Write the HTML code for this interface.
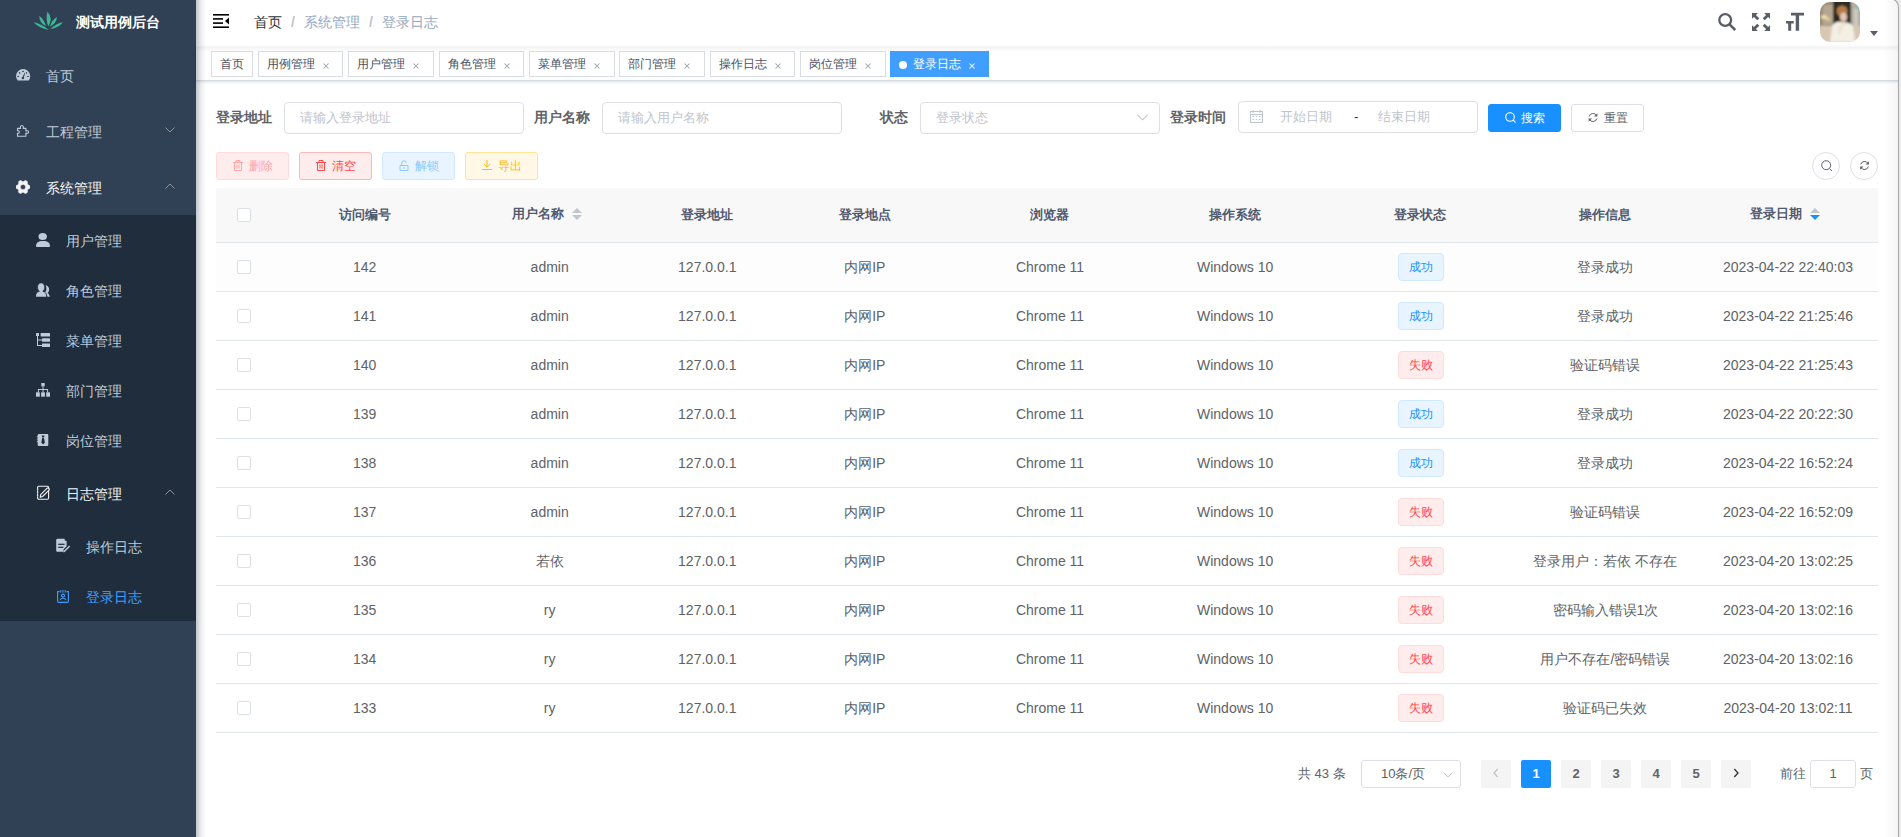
<!DOCTYPE html>
<html><head><meta charset="utf-8">
<style>
*{box-sizing:border-box;margin:0;padding:0}
html,body{width:1901px;height:837px;overflow:hidden;background:#fff}
body{position:relative;font-family:"Liberation Sans",sans-serif;font-size:14px;color:#606266}
.a{position:absolute;white-space:nowrap}
#side{position:absolute;left:0;top:0;width:196px;height:837px;background:#304156;overflow:hidden}
#sub{position:absolute;left:0;top:215px;width:196px;height:406px;background:#1f2d3d}
.mi{position:absolute;left:0;width:196px;height:56px;line-height:56px;color:#bfcbd9;font-size:14px}
.mi .t{position:absolute;left:46px;top:1px}
.mi svg{position:absolute}
.si{position:absolute;left:0;width:196px;height:50px;line-height:50px;color:#bfcbd9;font-size:14px}
.si .t{position:absolute;left:66px;top:1px}
.si svg{position:absolute}
.chev{position:absolute;left:165px;width:10px;height:6px}
#shadow{position:absolute;left:196px;top:0;width:10px;height:837px;background:linear-gradient(to right,rgba(0,21,41,.24),rgba(0,21,41,.08) 50%,rgba(0,21,41,0))}
/* navbar */
#nav{position:absolute;left:196px;top:0;width:1705px;height:47px;background:#fff}
.bc{position:absolute;top:0;line-height:44px;font-size:14px}
/* tags */
#tags{position:absolute;left:196px;top:47px;width:1705px;height:34px;background:#fff;border-bottom:1px solid #d8dce5;box-shadow:0 1px 3px 0 rgba(0,0,0,.12),0 0 3px 0 rgba(0,0,0,.04)}
.tag{position:absolute;top:4px;height:26px;line-height:24px;border:1px solid #d8dce5;color:#495060;background:#fff;font-size:12px;padding-left:8px}
.tag .x{position:absolute;top:0;font-size:11px;color:#495060}
/* form */
.lbl{position:absolute;top:101px;line-height:32px;font-weight:700;font-size:14px;color:#606266;text-align:right}
.inp{position:absolute;top:102px;height:32px;width:240px;border:1px solid #dcdfe6;border-radius:4px;background:#fff;line-height:30px;padding-left:15px;color:#c0c4cc;font-size:13px}
.btn{position:absolute;height:28px;line-height:26px;border:1px solid;border-radius:3px;font-size:12px;text-align:center}
/* table */
#thead{position:absolute;left:216px;top:188px;width:1662px;height:55px;background:#f8f8f9;border-bottom:1px solid #dfe6ec}
.th{position:absolute;top:188px;line-height:54px;font-size:13px;font-weight:700;color:#515a6e;text-align:center}
.row{position:absolute;left:216px;width:1662px;height:49px;border-bottom:1px solid #dfe6ec}
.td{position:absolute;line-height:48px;font-size:14px;color:#606266;text-align:center}
.cb{position:absolute;left:237px;width:14px;height:14px;border:1px solid #dcdfe6;border-radius:2px;background:#fff}
.st{position:absolute;left:1398px;width:46px;height:28px;line-height:26px;border:1px solid;border-radius:4px;font-size:12px;text-align:center}
.ok{background:#e8f4ff;border-color:#d1e9ff;color:#1890ff}
.ng{background:#ffeded;border-color:#ffdbdb;color:#ff4949}
/* pagination */
.pg{position:absolute;top:760px;width:30px;height:28px;line-height:28px;background:#f4f4f5;color:#606266;border-radius:2px;font-size:13px;font-weight:700;text-align:center}
</style></head><body>

<div id="side">
  <svg class="a" style="left:30px;top:8px" width="40" height="26" viewBox="0 0 40 26"><g fill="#3dba92"><path d="M17.40 3.80Q15.41 10.56 18.30 18.50Q23.39 10.07 17.40 3.80Z"/><path d="M9.20 8.00Q9.32 14.44 15.80 18.20Q14.18 11.29 9.20 8.00Z"/><path d="M27.00 9.00Q21.84 11.88 19.80 18.60Q26.48 15.36 27.00 9.00Z"/><path d="M3.60 14.20Q9.13 20.25 18.80 21.90Q11.48 15.61 3.60 14.20Z"/><path d="M33.00 14.20Q26.16 15.23 20.20 21.00Q28.60 19.82 33.00 14.20Z"/></g></svg>
  <div class="a" style="left:76px;top:0;line-height:44px;color:#fff;font-weight:700;font-size:14px">测试用例后台</div>

  <div class="mi" style="top:47px">
    <svg style="left:16px;top:21px" width="15" height="14" viewBox="0 0 15 14"><path fill="#bfcbd9" d="M1.6 12.6A7.1 7.1 0 1 1 12.6 12.6Z"/><g fill="#304156"><ellipse cx="2.1" cy="8.4" rx=".9" ry=".65"/><ellipse cx="3.6" cy="4.8" rx=".7" ry=".9"/><ellipse cx="7" cy="3.4" rx=".9" ry=".65"/><ellipse cx="10.5" cy="4.8" rx=".7" ry=".9"/><ellipse cx="12" cy="8.4" rx=".9" ry=".65"/><circle cx="6.9" cy="10.1" r="1.2"/><path d="M6.2 9.8 8.6 4.8 9.1 5 7.6 10.4Z"/></g></svg>
    <span class="t">首页</span>
  </div>
  <div class="mi" style="top:103px">
    <svg style="left:16px;top:21px" width="14" height="14" viewBox="0 0 14 14"><path fill="none" stroke="#bfcbd9" stroke-width="1.1" stroke-linejoin="round" d="M1.5 4.4H4.6C4.1 3.5 4.3 1.5 5.9 1.5S7.7 3.5 7.2 4.4H9.9V6.9C10.8 6.4 12.6 6.6 12.6 8S10.8 9.6 9.9 9.1V12.3H1.5V9.3C2.3 9.5 3.3 9.2 3.3 8S2.3 6.5 1.5 6.7Z"/></svg>
    <span class="t">工程管理</span>
    <svg class="chev" style="top:24px" viewBox="0 0 10 6"><path d="M.5 .5 5 5 9.5 .5" fill="none" stroke="#909399" stroke-width="1"/></svg>
  </div>
  <div class="mi" style="top:159px;color:#f4f4f5">
    <svg style="left:16px;top:21px" width="14" height="14" viewBox="0 0 14 14"><path fill="#f4f4f5" fill-rule="evenodd" stroke="#f4f4f5" stroke-width=".5" stroke-linejoin="round" d="M12.10 4.94L13.62 5.47L13.95 6.15L13.95 7.85L13.62 8.53L12.10 9.06L11.33 10.39L11.63 11.97L11.21 12.59L9.74 13.44L8.99 13.49L7.77 12.45L6.23 12.45L5.01 13.49L4.26 13.44L2.79 12.59L2.37 11.97L2.67 10.39L1.90 9.06L0.38 8.53L0.05 7.85L0.05 6.15L0.38 5.47L1.90 4.94L2.67 3.61L2.37 2.03L2.79 1.41L4.26 0.56L5.01 0.51L6.23 1.55L7.77 1.55L8.99 0.51L9.74 0.56L11.21 1.41L11.63 2.03L11.33 3.61ZM9.6 7A2.6 2.6 0 1 0 4.4 7A2.6 2.6 0 1 0 9.6 7Z"/></svg>
    <span class="t">系统管理</span>
    <svg class="chev" style="top:24px" viewBox="0 0 10 6"><path d="M.5 5.5 5 1 9.5 5.5" fill="none" stroke="#909399" stroke-width="1"/></svg>
  </div>
  <div id="sub"></div>
  <div class="si" style="top:215px">
    <svg style="left:36px;top:18px" width="14" height="14" viewBox="0 0 14 14"><g fill="#bfcbd9"><ellipse cx="6.7" cy="3.6" rx="4.2" ry="3.5"/><path d="M0 12.9c0-2.9 2.4-4.9 7-4.9s7 2 7 4.9c0 .6-.3 1-.9 1H.9C.3 13.9 0 13.5 0 12.9z"/></g></svg>
    <span class="t">用户管理</span>
  </div>
  <div class="si" style="top:265px">
    <svg style="left:36px;top:18px" width="14" height="14" viewBox="0 0 14 14"><path fill="#bfcbd9" d="M9.6 2.3C12 2.7 13.1 4.6 13.1 6.6 13.1 8.3 12.4 9.5 11.3 10.1 12.7 10.8 13.6 12 13.8 13.8H11.5C11.1 12 10.1 10.6 8.7 9.9 9.8 8.9 10.4 7.4 10.4 5.6 10.4 4.3 10.1 3.1 9.6 2.3Z"/><path fill="#bfcbd9" stroke="#1f2d3d" stroke-width=".8" d="M5.1 -.2C7 -.2 8.7 1.6 8.7 4.2 8.7 6 7.9 7.5 6.8 8.3 9.2 8.7 10.6 10.6 10.6 13.1V14.2H-.4V13.1C-.4 10.6 1 8.7 3.4 8.3 2.3 7.5 1.5 6 1.5 4.2 1.5 1.6 3.2-.2 5.1-.2Z"/></svg>
    <span class="t">角色管理</span>
  </div>
  <div class="si" style="top:315px">
    <svg style="left:36px;top:18px" width="14" height="14" viewBox="0 0 14 14"><g fill="#bfcbd9"><rect x="0" y="0" width="3" height="3" rx=".5"/><rect x="4.6" y="0" width="9.4" height="3.4" rx=".5"/><rect x="6" y="5.3" width="8" height="3.4" rx=".5"/><rect x="6" y="10.6" width="8" height="3.4" rx=".5"/><path d="M1 3h1v9h4v1H1z"/><path d="M1.5 6.5h4.5v1H1.5z"/></g></svg>
    <span class="t">菜单管理</span>
  </div>
  <div class="si" style="top:365px">
    <svg style="left:36px;top:18px" width="14" height="14" viewBox="0 0 14 14"><g fill="#bfcbd9"><rect x="5.3" y="0" width="3.4" height="3.4"/><rect x="0" y="9.3" width="3.8" height="4.4"/><rect x="5.1" y="9.3" width="3.8" height="4.4"/><rect x="10.2" y="9.3" width="3.8" height="4.4"/><path d="M6.5 3.4h1v2.6h4.6v3.3h-1V7H7.5v2.3h-1V7H2.9v2.3h-1V6h4.6z"/></g></svg>
    <span class="t">部门管理</span>
  </div>
  <div class="si" style="top:415px">
    <svg style="left:36px;top:18px" width="14" height="14" viewBox="0 0 14 14"><path fill="#bfcbd9" d="M3 1h8c.8 0 1.3.5 1.3 1.3v9.4c0 .8-.5 1.3-1.3 1.3H3c-.8 0-1.3-.5-1.3-1.3V2.3C1.7 1.5 2.2 1 3 1z"/><g fill="#bfcbd9"><rect x=".8" y="3.3" width="1.6" height=".9"/><rect x=".8" y="5.6" width="1.6" height=".9"/><rect x=".8" y="7.9" width="1.6" height=".9"/></g><path fill="#1f2d3d" d="M5.7 2.6h2.8l-.5 1.9H6.2zM6.2 4.9h1.8l.9 4.6-1.8 2-1.8-2z"/></svg>
    <span class="t">岗位管理</span>
  </div>
  <div class="mi" style="top:465px;color:#f4f4f5">
    <svg style="left:36px;top:20px" width="14" height="15" viewBox="0 0 14 15"><rect x="1.6" y="1.2" width="11" height="13" rx="1.2" fill="none" stroke="#f4f4f5" stroke-width="1.1"/><g fill="#1f2d3d"><rect x="0" y="4" width="3" height="1.2"/><rect x="0" y="7" width="3" height="1.2"/><rect x="0" y="10" width="3" height="1.2"/></g><g fill="#f4f4f5"><rect x=".9" y="4.2" width="1.5" height=".8"/><rect x=".9" y="7.2" width="1.5" height=".8"/><rect x=".9" y="10.2" width="1.5" height=".8"/></g><path d="M4.2 12.3 4.7 9.6 10.9 3.4a1.3 1.3 0 0 1 1.9 1.9L6.6 11.5z" fill="#1f2d3d" stroke="#f4f4f5" stroke-width="1.1" stroke-linejoin="round"/></svg>
    <span class="t" style="left:66px">日志管理</span>
    <svg class="chev" style="top:24px" viewBox="0 0 10 6"><path d="M.5 5.5 5 1 9.5 5.5" fill="none" stroke="#909399" stroke-width="1"/></svg>
  </div>
  <div class="si" style="top:521px">
    <svg style="left:56px;top:17px" width="15" height="15" viewBox="0 0 15 15"><path fill="#bfcbd9" d="M1.6 0.8h6.8L10.6 3v5.2L7.6 11.2V13.8H1.6C.8 13.8 .2 13.2 .2 12.4v-10.2C.2 1.4.8 .8 1.6 .8z"/><circle cx="9.6" cy="1.7" r="1" fill="#1f2d3d"/><g fill="#1f2d3d"><rect x="2.2" y="5.7" width="6.4" height="1.2"/><rect x="2.2" y="8.7" width="5.2" height="1.2"/></g><path fill="#bfcbd9" d="M13.2 7.6l1 1-5.4 5.4-1.5.4.4-1.5z"/></svg>
    <span class="t" style="left:86px">操作日志</span>
  </div>
  <div class="si" style="top:571px;color:#409eff">
    <svg style="left:57px;top:19px" width="12" height="13" viewBox="0 0 12 13"><g fill="none" stroke="#409eff" stroke-width="1.1"><path d="M2.5 1.6H.6v9.6c0 .7.5 1.2 1.2 1.2h8.4c.7 0 1.2-.5 1.2-1.2V1.6H9.5"/><circle cx="6" cy="5.6" r="1.5"/><path d="M3.2 10.2c.4-1.4 1.4-2.2 2.8-2.2s2.4.8 2.8 2.2"/></g><g fill="#409eff"><rect x="3.3" y="0" width="1" height="2.6"/><rect x="5.5" y="0" width="1" height="2.6"/><rect x="7.7" y="0" width="1" height="2.6"/></g></svg>
    <span class="t" style="left:86px">登录日志</span>
  </div>
</div>

<div id="nav">
  <svg class="a" style="left:17px;top:14px" width="16" height="14" viewBox="0 0 16 14"><g fill="#000"><rect x="0" y="0" width="16" height="1.6"/><rect x="0" y="12.4" width="16" height="1.6"/><rect x="0" y="4.1" width="10" height="1.6"/><rect x="0" y="8.3" width="10" height="1.6"/><path d="M16 3.6v6.8L12 7z"/></g></svg>
  <span class="bc" style="left:58px;color:#303133">首页</span>
  <span class="bc" style="left:95px;color:#c0c4cc;font-weight:700">/</span>
  <span class="bc" style="left:108px;color:#97a8be">系统管理</span>
  <span class="bc" style="left:173px;color:#c0c4cc;font-weight:700">/</span>
  <span class="bc" style="left:186px;color:#97a8be">登录日志</span>
  <svg class="a" style="left:1522px;top:12px" width="20" height="20" viewBox="0 0 20 20"><g fill="none" stroke="#5a5e66" stroke-width="2.3"><circle cx="7.2" cy="8" r="5.9"/><path d="M11.6 12.4l5.6 5.6" stroke-width="2.5"/></g></svg>
  <svg class="a" style="left:1556px;top:13px" width="18" height="18" viewBox="0 0 18 18"><g fill="#5a5e66"><path d="M0 0h5.8L3.9 1.9 7.3 5.3 5.3 7.3 1.9 3.9 0 5.8z"/><path d="M18 0v5.8L16.1 3.9 12.7 7.3 10.7 5.3 14.1 1.9 12.2 0z"/><path d="M0 18v-5.8l1.9 1.9 3.4-3.4 2 2-3.4 3.4 1.9 1.9z"/><path d="M18 18h-5.8l1.9-1.9-3.4-3.4 2-2 3.4 3.4 1.9-1.9z"/></g></svg>
  <svg class="a" style="left:1590px;top:12px" width="18" height="19" viewBox="0 0 18 19"><g fill="#5a5e66"><path d="M5 0.7h13v2.9h-4.9V18.8H9.7V3.6H5z"/><path d="M0 8.9h7.7v2.5H5.2v7.4H2.2v-7.4H0z"/></g></svg>
  <svg class="a" style="left:1624px;top:2px" width="40" height="40" viewBox="0 0 40 40">
  <defs><clipPath id="avc"><rect x="0" y="0" width="40" height="40" rx="10"/></clipPath><filter id="avb" x="-10%" y="-10%" width="120%" height="120%"><feGaussianBlur stdDeviation="0.9"/></filter></defs>
  <g clip-path="url(#avc)"><g filter="url(#avb)">
    <rect x="-2" y="-2" width="44" height="44" fill="#b9a58c"/>
    <rect x="-2" y="-2" width="16" height="26" fill="#9c8d78"/>
    <rect x="3" y="3" width="10" height="20" fill="#b4a690"/>
    <rect x="13" y="-2" width="20" height="24" fill="#2e2a22"/>
    <rect x="31" y="-2" width="11" height="32" fill="#b3aca0"/>
    <rect x="34" y="6" width="4" height="22" fill="#cfcac0"/>
    <rect x="-2" y="24" width="44" height="18" fill="#d8c7b2"/>
    <ellipse cx="4" cy="15" rx="3" ry="2" fill="#f1dfae"/>
    <ellipse cx="8" cy="17" rx="2" ry="1.5" fill="#e9d5a0"/>
    <ellipse cx="22" cy="9" rx="5.5" ry="5.5" fill="#b27a48"/>
    <ellipse cx="23.5" cy="15" rx="3.5" ry="4.5" fill="#e4c6b0"/>
    <path d="M10 40 L12 24 C14 20 18 19 22 20 C27 20 31 21 33 24 L35 40Z" fill="#f3efe3"/>
    <path d="M18 30 C19 24 21 21 24 20 L26 22 C23 24 21 28 20 33Z" fill="#e8e2d2"/>
    <circle cx="38" cy="6" r="1.5" fill="#3cc8c8"/>
  </g></g>
</svg>
<svg class="a" style="left:1674px;top:31px" width="8" height="5" viewBox="0 0 8 5"><path d="M0 0h8L4 5z" fill="#5a5e66"/></svg>
</div>
<div id="tags">
  <div class="tag" style="left:15px;width:42px">首页</div>
  <div class="tag" style="left:62px;width:85px">用例管理<svg class="a" style="left:64px;top:10.5px" width="6" height="6" viewBox="0 0 6 6"><path d="M.5.5l5 5M5.5.5l-5 5" stroke="#9aa0aa" stroke-width="1.05"/></svg></div>
  <div class="tag" style="left:152px;width:86px">用户管理<svg class="a" style="left:64px;top:10.5px" width="6" height="6" viewBox="0 0 6 6"><path d="M.5.5l5 5M5.5.5l-5 5" stroke="#9aa0aa" stroke-width="1.05"/></svg></div>
  <div class="tag" style="left:243px;width:85px">角色管理<svg class="a" style="left:64px;top:10.5px" width="6" height="6" viewBox="0 0 6 6"><path d="M.5.5l5 5M5.5.5l-5 5" stroke="#9aa0aa" stroke-width="1.05"/></svg></div>
  <div class="tag" style="left:333px;width:86px">菜单管理<svg class="a" style="left:64px;top:10.5px" width="6" height="6" viewBox="0 0 6 6"><path d="M.5.5l5 5M5.5.5l-5 5" stroke="#9aa0aa" stroke-width="1.05"/></svg></div>
  <div class="tag" style="left:423px;width:86px">部门管理<svg class="a" style="left:64px;top:10.5px" width="6" height="6" viewBox="0 0 6 6"><path d="M.5.5l5 5M5.5.5l-5 5" stroke="#9aa0aa" stroke-width="1.05"/></svg></div>
  <div class="tag" style="left:514px;width:85px">操作日志<svg class="a" style="left:64px;top:10.5px" width="6" height="6" viewBox="0 0 6 6"><path d="M.5.5l5 5M5.5.5l-5 5" stroke="#9aa0aa" stroke-width="1.05"/></svg></div>
  <div class="tag" style="left:604px;width:86px">岗位管理<svg class="a" style="left:64px;top:10.5px" width="6" height="6" viewBox="0 0 6 6"><path d="M.5.5l5 5M5.5.5l-5 5" stroke="#9aa0aa" stroke-width="1.05"/></svg></div>
  <div class="tag" style="left:694px;width:99px;background:#409eff;border-color:#409eff;color:#fff;padding-left:22px"><span class="a" style="left:8px;top:9px;width:8px;height:8px;border-radius:4px;background:#fff"></span>登录日志<svg class="a" style="left:77.5px;top:10.5px" width="6" height="6" viewBox="0 0 6 6"><path d="M.5.5l5 5M5.5.5l-5 5" stroke="#fff" stroke-width="1.05"/></svg></div>
</div>


<div class="lbl" style="left:216px;width:56px">登录地址</div>
<div class="inp" style="left:284px">请输入登录地址</div>
<div class="lbl" style="left:534px;width:56px">用户名称</div>
<div class="inp" style="left:602px">请输入用户名称</div>
<div class="lbl" style="left:880px;width:28px">状态</div>
<div class="inp" style="left:920px">登录状态<svg class="a" style="left:216px;top:11px" width="11" height="7" viewBox="0 0 11 7"><path d="M.5.8 5.5 5.8 10.5.8" fill="none" stroke="#c0c4cc" stroke-width="1.1"/></svg></div>
<div class="lbl" style="left:1170px;width:56px">登录时间</div>
<div class="inp" style="left:1238px;padding-left:0;top:101px">
  <svg class="a" style="left:11px;top:8px" width="13" height="13" viewBox="0 0 13 13"><g fill="none" stroke="#c0c4cc" stroke-width="1"><rect x=".5" y="1.5" width="12" height="11"/><path d="M.5 4.5h12M3 0v3M10 0v3"/></g><g fill="#c0c4cc"><rect x="2.5" y="6" width="1.5" height="1"/><rect x="5.7" y="6" width="1.5" height="1"/><rect x="9" y="6" width="1.5" height="1"/><rect x="2.5" y="9" width="1.5" height="1"/><rect x="5.7" y="9" width="1.5" height="1"/><rect x="9" y="9" width="1.5" height="1"/></g></svg>
  <span class="a" style="left:41px;top:0">开始日期</span>
  <span class="a" style="left:115px;top:0;color:#303133">-</span>
  <span class="a" style="left:139px;top:0">结束日期</span>
</div>
<div class="btn" style="left:1488px;top:104px;width:73px;background:#1890ff;border-color:#1890ff;color:#fff"><svg style="position:relative;top:1px;margin-right:5px" width="11" height="11" viewBox="0 0 11 11"><g fill="none" stroke="#fff" stroke-width="1.1"><circle cx="5" cy="5" r="4.3"/><path d="M8.2 8.2l2.3 2.3"/></g></svg>搜索</div>
<div class="btn" style="left:1571px;top:104px;width:73px;background:#fff;border-color:#dcdfe6;color:#606266"><svg style="position:relative;top:1px;margin-right:6px" width="10" height="11" viewBox="0 0 10 11"><g fill="none" stroke="#606266" stroke-width="1"><path d="M8.6 3.6A4 4 0 0 0 1.2 4.4"/><path d="M1.4 7.4A4 4 0 0 0 8.8 6.6"/></g><path d="M9.4 1.2v3.4H6z" fill="#606266"/><path d="M.6 9.8V6.4H4z" fill="#606266"/></svg>重置</div>

<div class="btn" style="left:216px;top:152px;width:73px;background:#ffeded;border-color:#ffdbdb;color:#ffa4a4"><svg style="position:relative;top:1px;margin-right:6px" width="10" height="11" viewBox="0 0 10 11"><g fill="none" stroke="#ffa4a4" stroke-width="1"><path d="M0 2.5h10M3 2.5V.5h4v2M1.5 2.5v8h7v-8M4 4.5v4M6 4.5v4"/></g></svg>删除</div>
<div class="btn" style="left:299px;top:152px;width:73px;background:#ffeded;border-color:#ffb6b6;color:#ff4949"><svg style="position:relative;top:1px;margin-right:6px" width="10" height="11" viewBox="0 0 10 11"><g fill="none" stroke="#ff4949" stroke-width="1"><path d="M0 2.5h10M3 2.5V.5h4v2M1.5 2.5v8h7v-8M4 4.5v4M6 4.5v4"/></g></svg>清空</div>
<div class="btn" style="left:382px;top:152px;width:73px;background:#e8f4ff;border-color:#d1e9ff;color:#8cc8ff"><svg style="position:relative;top:1px;margin-right:6px" width="10" height="11" viewBox="0 0 10 11"><g fill="none" stroke="#8cc8ff" stroke-width="1"><path d="M1 5.5h8v5H1z"/><path d="M2.8 5.5V3a2.2 2.2 0 0 1 4.4 0"/><path d="M5 7v2"/></g></svg>解锁</div>
<div class="btn" style="left:465px;top:152px;width:73px;background:#fff8e6;border-color:#ffe399;color:#ffba00"><svg style="position:relative;top:0px;margin-right:6px" width="10" height="10" viewBox="0 0 10 10"><g fill="none" stroke="#ffba00" stroke-width="1"><path d="M5 0v7M1.8 4 5 7.2 8.2 4M0 9.5h10"/></g></svg>导出</div>
<div class="btn" style="left:1812px;top:152px;width:28px;border-radius:50%;border-color:#dcdfe6;background:#fff"><svg class="a" style="left:7.5px;top:6.5px" width="12" height="12" viewBox="0 0 12 12"><g fill="none" stroke="#606266" stroke-width="1"><circle cx="5.2" cy="5.2" r="4.5"/><path d="M8.5 8.5l2.5 2.5"/></g></svg></div>
<div class="btn" style="left:1850px;top:152px;width:28px;border-radius:50%;border-color:#dcdfe6;background:#fff"><svg class="a" style="left:8px;top:7px" width="11" height="11" viewBox="0 0 10 11"><g fill="none" stroke="#606266" stroke-width="1"><path d="M8.6 3.6A4 4 0 0 0 1.2 4.4"/><path d="M1.4 7.4A4 4 0 0 0 8.8 6.6"/></g><path d="M9.4 1.2v3.4H6z" fill="#606266"/><path d="M.6 9.8V6.4H4z" fill="#606266"/></svg></div>

<div id="thead"></div>
<div class="cb" style="top:208px"></div>

<div class="th" style="left:272.00px;width:185.14px">访问编号</div>
<div class="th" style="top:187px;left:457.14px;width:185.14px">用户名称<span style="display:inline-block;position:relative;width:24px;height:34px;vertical-align:middle;top:0px"><svg class="a" style="left:8px;top:10px" width="10" height="12" viewBox="0 0 10 12"><path d="M0 5h10L5 0z" fill="#c0c4cc"/><path d="M0 7h10L5 12z" fill="#c0c4cc"/></svg></span></div>
<div class="th" style="left:642.29px;width:130.00px">登录地址</div>
<div class="th" style="left:772.29px;width:185.14px">登录地点</div>
<div class="th" style="left:957.43px;width:185.14px">浏览器</div>
<div class="th" style="left:1142.57px;width:185.14px">操作系统</div>
<div class="th" style="left:1327.71px;width:185.14px">登录状态</div>
<div class="th" style="left:1512.86px;width:185.14px">操作信息</div>
<div class="th" style="top:187px;left:1698.00px;width:180.00px">登录日期<span style="display:inline-block;position:relative;width:24px;height:34px;vertical-align:middle;top:0px"><svg class="a" style="left:8px;top:10px" width="10" height="12" viewBox="0 0 10 12"><path d="M0 5h10L5 0z" fill="#c0c4cc"/><path d="M0 7h10L5 12z" fill="#1890ff"/></svg></span></div>
<div class="row" style="top:243px;background:#fdfdfd"></div>
<div class="cb" style="top:260px"></div>
<div class="td" style="left:272.00px;width:185.14px;top:243px">142</div>
<div class="td" style="left:457.14px;width:185.14px;top:243px">admin</div>
<div class="td" style="left:642.29px;width:130.00px;top:243px">127.0.0.1</div>
<div class="td" style="left:772.29px;width:185.14px;top:243px">内网IP</div>
<div class="td" style="left:957.43px;width:185.14px;top:243px">Chrome 11</div>
<div class="td" style="left:1142.57px;width:185.14px;top:243px">Windows 10</div>
<div class="st ok" style="top:253px">成功</div>
<div class="td" style="left:1512.86px;width:185.14px;top:243px">登录成功</div>
<div class="td" style="left:1698.00px;width:180.00px;top:243px">2023-04-22 22:40:03</div>
<div class="row" style="top:292px"></div>
<div class="cb" style="top:309px"></div>
<div class="td" style="left:272.00px;width:185.14px;top:292px">141</div>
<div class="td" style="left:457.14px;width:185.14px;top:292px">admin</div>
<div class="td" style="left:642.29px;width:130.00px;top:292px">127.0.0.1</div>
<div class="td" style="left:772.29px;width:185.14px;top:292px">内网IP</div>
<div class="td" style="left:957.43px;width:185.14px;top:292px">Chrome 11</div>
<div class="td" style="left:1142.57px;width:185.14px;top:292px">Windows 10</div>
<div class="st ok" style="top:302px">成功</div>
<div class="td" style="left:1512.86px;width:185.14px;top:292px">登录成功</div>
<div class="td" style="left:1698.00px;width:180.00px;top:292px">2023-04-22 21:25:46</div>
<div class="row" style="top:341px"></div>
<div class="cb" style="top:358px"></div>
<div class="td" style="left:272.00px;width:185.14px;top:341px">140</div>
<div class="td" style="left:457.14px;width:185.14px;top:341px">admin</div>
<div class="td" style="left:642.29px;width:130.00px;top:341px">127.0.0.1</div>
<div class="td" style="left:772.29px;width:185.14px;top:341px">内网IP</div>
<div class="td" style="left:957.43px;width:185.14px;top:341px">Chrome 11</div>
<div class="td" style="left:1142.57px;width:185.14px;top:341px">Windows 10</div>
<div class="st ng" style="top:351px">失败</div>
<div class="td" style="left:1512.86px;width:185.14px;top:341px">验证码错误</div>
<div class="td" style="left:1698.00px;width:180.00px;top:341px">2023-04-22 21:25:43</div>
<div class="row" style="top:390px"></div>
<div class="cb" style="top:407px"></div>
<div class="td" style="left:272.00px;width:185.14px;top:390px">139</div>
<div class="td" style="left:457.14px;width:185.14px;top:390px">admin</div>
<div class="td" style="left:642.29px;width:130.00px;top:390px">127.0.0.1</div>
<div class="td" style="left:772.29px;width:185.14px;top:390px">内网IP</div>
<div class="td" style="left:957.43px;width:185.14px;top:390px">Chrome 11</div>
<div class="td" style="left:1142.57px;width:185.14px;top:390px">Windows 10</div>
<div class="st ok" style="top:400px">成功</div>
<div class="td" style="left:1512.86px;width:185.14px;top:390px">登录成功</div>
<div class="td" style="left:1698.00px;width:180.00px;top:390px">2023-04-22 20:22:30</div>
<div class="row" style="top:439px"></div>
<div class="cb" style="top:456px"></div>
<div class="td" style="left:272.00px;width:185.14px;top:439px">138</div>
<div class="td" style="left:457.14px;width:185.14px;top:439px">admin</div>
<div class="td" style="left:642.29px;width:130.00px;top:439px">127.0.0.1</div>
<div class="td" style="left:772.29px;width:185.14px;top:439px">内网IP</div>
<div class="td" style="left:957.43px;width:185.14px;top:439px">Chrome 11</div>
<div class="td" style="left:1142.57px;width:185.14px;top:439px">Windows 10</div>
<div class="st ok" style="top:449px">成功</div>
<div class="td" style="left:1512.86px;width:185.14px;top:439px">登录成功</div>
<div class="td" style="left:1698.00px;width:180.00px;top:439px">2023-04-22 16:52:24</div>
<div class="row" style="top:488px"></div>
<div class="cb" style="top:505px"></div>
<div class="td" style="left:272.00px;width:185.14px;top:488px">137</div>
<div class="td" style="left:457.14px;width:185.14px;top:488px">admin</div>
<div class="td" style="left:642.29px;width:130.00px;top:488px">127.0.0.1</div>
<div class="td" style="left:772.29px;width:185.14px;top:488px">内网IP</div>
<div class="td" style="left:957.43px;width:185.14px;top:488px">Chrome 11</div>
<div class="td" style="left:1142.57px;width:185.14px;top:488px">Windows 10</div>
<div class="st ng" style="top:498px">失败</div>
<div class="td" style="left:1512.86px;width:185.14px;top:488px">验证码错误</div>
<div class="td" style="left:1698.00px;width:180.00px;top:488px">2023-04-22 16:52:09</div>
<div class="row" style="top:537px"></div>
<div class="cb" style="top:554px"></div>
<div class="td" style="left:272.00px;width:185.14px;top:537px">136</div>
<div class="td" style="left:457.14px;width:185.14px;top:537px">若依</div>
<div class="td" style="left:642.29px;width:130.00px;top:537px">127.0.0.1</div>
<div class="td" style="left:772.29px;width:185.14px;top:537px">内网IP</div>
<div class="td" style="left:957.43px;width:185.14px;top:537px">Chrome 11</div>
<div class="td" style="left:1142.57px;width:185.14px;top:537px">Windows 10</div>
<div class="st ng" style="top:547px">失败</div>
<div class="td" style="left:1512.86px;width:185.14px;top:537px">登录用户：若依 不存在</div>
<div class="td" style="left:1698.00px;width:180.00px;top:537px">2023-04-20 13:02:25</div>
<div class="row" style="top:586px"></div>
<div class="cb" style="top:603px"></div>
<div class="td" style="left:272.00px;width:185.14px;top:586px">135</div>
<div class="td" style="left:457.14px;width:185.14px;top:586px">ry</div>
<div class="td" style="left:642.29px;width:130.00px;top:586px">127.0.0.1</div>
<div class="td" style="left:772.29px;width:185.14px;top:586px">内网IP</div>
<div class="td" style="left:957.43px;width:185.14px;top:586px">Chrome 11</div>
<div class="td" style="left:1142.57px;width:185.14px;top:586px">Windows 10</div>
<div class="st ng" style="top:596px">失败</div>
<div class="td" style="left:1512.86px;width:185.14px;top:586px">密码输入错误1次</div>
<div class="td" style="left:1698.00px;width:180.00px;top:586px">2023-04-20 13:02:16</div>
<div class="row" style="top:635px"></div>
<div class="cb" style="top:652px"></div>
<div class="td" style="left:272.00px;width:185.14px;top:635px">134</div>
<div class="td" style="left:457.14px;width:185.14px;top:635px">ry</div>
<div class="td" style="left:642.29px;width:130.00px;top:635px">127.0.0.1</div>
<div class="td" style="left:772.29px;width:185.14px;top:635px">内网IP</div>
<div class="td" style="left:957.43px;width:185.14px;top:635px">Chrome 11</div>
<div class="td" style="left:1142.57px;width:185.14px;top:635px">Windows 10</div>
<div class="st ng" style="top:645px">失败</div>
<div class="td" style="left:1512.86px;width:185.14px;top:635px">用户不存在/密码错误</div>
<div class="td" style="left:1698.00px;width:180.00px;top:635px">2023-04-20 13:02:16</div>
<div class="row" style="top:684px"></div>
<div class="cb" style="top:701px"></div>
<div class="td" style="left:272.00px;width:185.14px;top:684px">133</div>
<div class="td" style="left:457.14px;width:185.14px;top:684px">ry</div>
<div class="td" style="left:642.29px;width:130.00px;top:684px">127.0.0.1</div>
<div class="td" style="left:772.29px;width:185.14px;top:684px">内网IP</div>
<div class="td" style="left:957.43px;width:185.14px;top:684px">Chrome 11</div>
<div class="td" style="left:1142.57px;width:185.14px;top:684px">Windows 10</div>
<div class="st ng" style="top:694px">失败</div>
<div class="td" style="left:1512.86px;width:185.14px;top:684px">验证码已失效</div>
<div class="td" style="left:1698.00px;width:180.00px;top:684px">2023-04-20 13:02:11</div>

<div class="a" style="left:1298px;top:760px;line-height:28px;font-size:13px;color:#606266">共 43 条</div>
<div class="a" style="left:1361px;top:760px;width:100px;height:28px;border:1px solid #dcdfe6;border-radius:3px;line-height:26px;font-size:13px;color:#606266;padding-left:19px">10条/页<svg class="a" style="left:81px;top:11px" width="10" height="6" viewBox="0 0 10 6"><path d="M.5.5 5 5 9.5.5" fill="none" stroke="#c0c4cc" stroke-width="1"/></svg></div>
<div class="pg" style="left:1481px;color:#c0c4cc"><svg style="position:relative;top:1px" width="8" height="12" viewBox="0 0 8 12"><path d="M5.7 2 2 6 5.7 10" fill="none" stroke="#c0c4cc" stroke-width="1.3"/></svg></div>
<div class="pg" style="left:1521px;background:#1890ff;color:#fff">1</div>
<div class="pg" style="left:1561px">2</div>
<div class="pg" style="left:1601px">3</div>
<div class="pg" style="left:1641px">4</div>
<div class="pg" style="left:1681px">5</div>
<div class="pg" style="left:1721px"><svg style="position:relative;top:1px" width="8" height="12" viewBox="0 0 8 12"><path d="M2.3 2 6 6 2.3 10" fill="none" stroke="#303133" stroke-width="1.3"/></svg></div>
<div class="a" style="left:1780px;top:760px;line-height:28px;font-size:13px;color:#606266">前往</div>
<div class="a" style="left:1810px;top:760px;width:46px;height:28px;border:1px solid #dcdfe6;border-radius:3px;line-height:26px;font-size:13px;color:#606266;text-align:center">1</div>
<div class="a" style="left:1860px;top:760px;line-height:28px;font-size:13px;color:#606266">页</div>

<div class="a" style="left:196px;top:47px;width:1705px;height:5px;background:linear-gradient(to bottom,rgba(0,21,41,.055),rgba(0,21,41,.025) 50%,rgba(0,21,41,0))"></div>
<div id="shadow"></div>
<div class="a" style="left:1884px;top:0;width:14px;height:837px;background:linear-gradient(to right,rgba(0,0,0,0),rgba(0,0,0,.04))"></div>
<svg class="a" style="left:1890px;top:0" width="11" height="837" viewBox="0 0 11 837"><path d="M4 0C6.5 1.5 8.5 4 8.5 7.5V837H11V0z" fill="#ececec"/><path d="M4 -0.5C6.5 1 8.5 4 8.5 7.5V837" fill="none" stroke="#a9a9a9" stroke-width="1.1"/></svg>
</body></html>
